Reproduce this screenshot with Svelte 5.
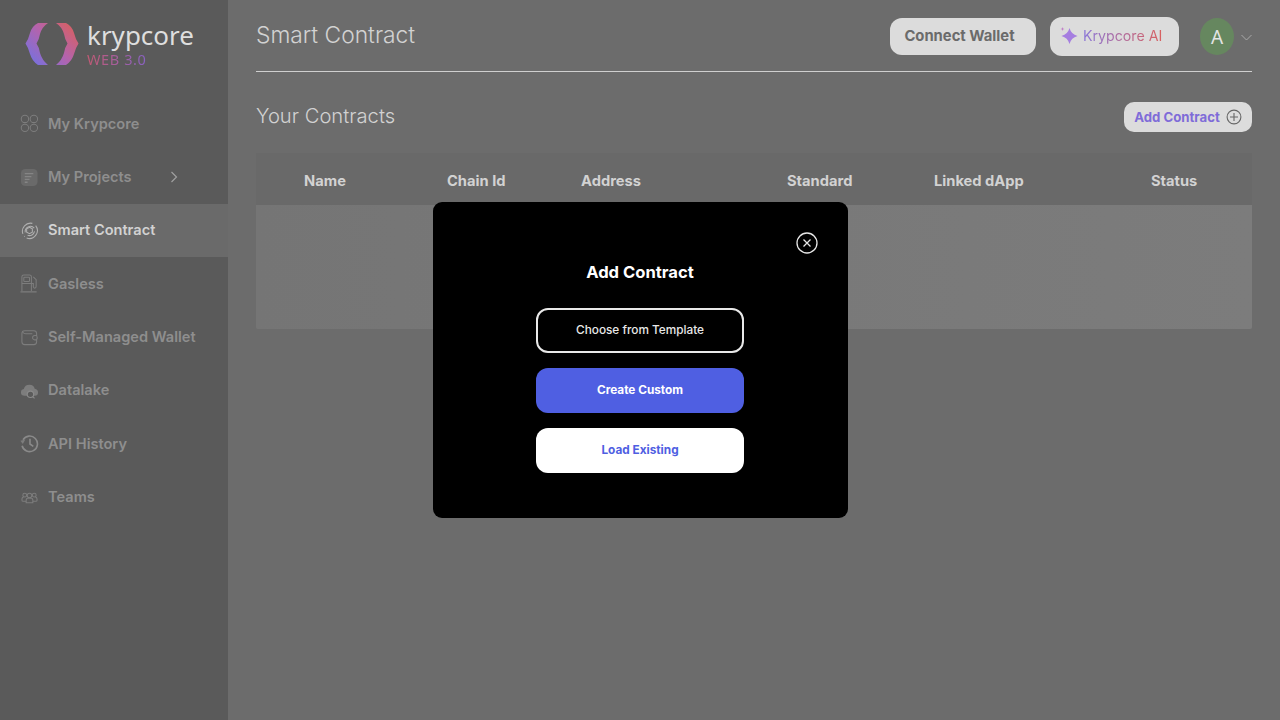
<script lang="ts">
    const columns = ["Name", "Chain Id", "Address", "Standard", "Linked dApp", "Status"];
</script>

<div class="page">
    <aside class="sidebar">
        <div class="logo">
            <svg width="56" height="46" viewBox="0 0 56 46" aria-hidden="true">
                <defs>
                    <linearGradient id="logoGrad" gradientUnits="userSpaceOnUse" x1="48" y1="2" x2="8" y2="42">
                        <stop offset="0" stop-color="#d8605f" />
                        <stop offset="0.5" stop-color="#b563ab" />
                        <stop offset="1" stop-color="#7a70dc" />
                    </linearGradient>
                </defs>
                <path d="M13 2 Q7 5 5 12 Q3.5 18 0.5 22.5 Q3.5 27 5 33 Q7 40 13 44 H23 Q17 39 15 32 Q14 26 11.5 22.5 Q14 19 15 13 Q17 6 23 2 Z" fill="url(#logoGrad)" />
                <path d="M41 2 Q47 5 49 12 Q50.5 18 53.5 22.5 Q50.5 27 49 33 Q47 40 41 44 H31 Q37 39 39 32 Q40 26 42.5 22.5 Q40 19 39 13 Q37 6 31 2 Z" fill="url(#logoGrad)" />
            </svg>
            <div class="logo-text">
                <span class="logo-name">krypcore</span>
                <span class="logo-sub">WEB 3.0</span>
            </div>
        </div>

        <nav class="nav">
            <div class="nav-item">
                <svg class="nav-icon" viewBox="0 0 20 20" aria-hidden="true">
                    <circle cx="5.2" cy="5.2" r="3.9" /><circle cx="14.6" cy="5.2" r="3.9" />
                    <circle cx="5.2" cy="14.6" r="3.9" /><circle cx="14.6" cy="14.6" r="3.9" />
                </svg>
                <span>My Krypcore</span>
            </div>
            <div class="nav-item">
                <svg class="nav-icon" viewBox="0 0 20 20" aria-hidden="true">
                    <rect x="1" y="1" width="17.5" height="18" rx="4.5" class="solid" />
                    <path d="M5 6 H14 M5 9 H12 M5 12 H10 M5 15 H8" class="lines" />
                </svg>
                <span>My Projects</span>
                <svg class="nav-chevron" width="8" height="12" viewBox="0 0 8 12" aria-hidden="true">
                    <path d="M1.5 1 L6.5 6 L1.5 11" />
                </svg>
            </div>
            <div class="nav-item active">
                <svg class="nav-icon" viewBox="0 0 20 20" aria-hidden="true">
                    <path d="M3 13.5 A8.5 8.5 0 0 1 13 2.5 M16.5 4.8 A8.5 8.5 0 0 1 7 18 M4.5 16 L5 16.4" />
                    <path d="M5.5 12 A5.5 5.5 0 0 1 15 7.5 M15.3 11 A5.5 5.5 0 0 1 8 15" />
                    <path d="M10 6.6 L13 8.3 V11.7 L10 13.4 L7 11.7 V8.3 Z" />
                </svg>
                <span>Smart Contract</span>
            </div>
            <div class="nav-item">
                <svg class="nav-icon" viewBox="0 0 20 20" aria-hidden="true">
                    <path d="M2 18 V3 Q2 1 4 1 H10 Q12 1 12 3 V18 M0.5 18.8 H17.5" />
                    <rect x="4" y="3.5" width="6" height="4.5" rx="0.8" />
                    <path d="M2 10 H12 M14 3 L17 6 V13 Q17 15 15.5 15 Q14 15 14 13 V10 H12" />
                </svg>
                <span>Gasless</span>
            </div>
            <div class="nav-item">
                <svg class="nav-icon" viewBox="0 0 20 20" aria-hidden="true">
                    <path d="M17.5 8 V6 Q17.5 3 14.5 3 H5 Q2 3 2 6 V14.5 Q2 17.5 5 17.5 H14.5 Q17.5 17.5 17.5 14.5 V12.5" />
                    <path d="M3 4.5 Q4 6 6 6 H13" />
                    <path d="M17.5 8 H15.5 A2.2 2.2 0 0 0 15.5 12.5 H17.5 Q18.7 10.2 17.5 8 Z" />
                </svg>
                <span>Self-Managed Wallet</span>
            </div>
            <div class="nav-item">
                <svg class="nav-icon" viewBox="0 0 20 20" aria-hidden="true">
                    <path class="solid" d="M5 15.5 Q1 15.5 1 12 Q1 9 4 8.5 Q5 4 10 4 Q14.5 4 15.5 8.2 Q19 8.8 19 12 Q19 15.5 15.5 15.5 Z" />
                    <circle class="glass" cx="11" cy="14" r="3.4" />
                    <path class="glass" d="M13.4 16.4 L15.3 18.3" />
                </svg>
                <span>Datalake</span>
            </div>
            <div class="nav-item">
                <svg class="nav-icon thick" viewBox="0 0 20 20" aria-hidden="true">
                    <path d="M3.2 6 A8.2 8.2 0 1 1 2.2 12.4" />
                    <path class="solid" d="M0.4 7.2 L5.6 5.8 L3 10.6 Z" />
                    <path d="M10.5 5 V10.5 L14 13" />
                </svg>
                <span>API History</span>
            </div>
            <div class="nav-item">
                <svg class="nav-icon" viewBox="0 0 20 20" aria-hidden="true">
                    <circle cx="10" cy="8" r="2.4" /><circle cx="5" cy="7.5" r="2" /><circle cx="15" cy="7.5" r="2" />
                    <path d="M6.5 15.5 V12.5 Q6.5 10.5 10 10.5 Q13.5 10.5 13.5 12.5 V15.5 Z" />
                    <path d="M6.5 14 H3.5 Q2 14 2 12.5 Q2 9.5 4 9.5 M13.5 14 H16.5 Q18 14 18 12.5 Q18 9.5 16 9.5" />
                </svg>
                <span>Teams</span>
            </div>
        </nav>
    </aside>

    <main class="main">
        <header class="topbar">
            <h1>Smart Contract</h1>
            <div class="top-actions">
                <button class="btn-wallet">Connect Wallet</button>
                <button class="btn-ai">
                    <svg width="18" height="18" viewBox="0 0 18 18" aria-hidden="true">
                        <path d="M9.5 1 Q11.2 7.3 17.5 9 Q11.2 10.7 9.5 17 Q7.8 10.7 1.5 9 Q7.8 7.3 9.5 1 Z" fill="#a57ee0" />
                        <path d="M2.5 0 L3 1.5 L4.5 2 L3 2.5 L2.5 4 L2 2.5 L0.5 2 L2 1.5 Z" fill="#c07cc8" />
                    </svg>
                    <span class="ai-label">Krypcore AI</span>
                </button>
                <div class="avatar">A</div>
                <svg class="avatar-chevron" width="11" height="7" viewBox="0 0 11 7" aria-hidden="true">
                    <path d="M0.5 1 L5.5 6 L10.5 1" />
                </svg>
            </div>
        </header>

        <div class="section-head">
            <h2>Your Contracts</h2>
            <button class="btn-add">
                Add Contract
                <svg width="16" height="16" viewBox="0 0 16 16" aria-hidden="true">
                    <circle cx="8" cy="8" r="6.9" />
                    <path d="M8 4 V12 M4 8 H12" />
                </svg>
            </button>
        </div>

        <div class="table">
            <div class="table-head">
                {#each columns as col}
                    <span>{col}</span>
                {/each}
            </div>
            <div class="table-body"></div>
        </div>
    </main>
</div>

<div class="backdrop">
    <div class="dialog" role="dialog" aria-modal="true" aria-labelledby="dialog-title">
        <button class="close" aria-label="Close">
            <svg width="22" height="22" viewBox="0 0 22 22" aria-hidden="true">
                <circle cx="11" cy="11" r="10" />
                <path d="M7.5 7.5 L14.5 14.5 M14.5 7.5 L7.5 14.5" />
            </svg>
        </button>
        <h2 id="dialog-title">Add Contract</h2>
        <div class="dialog-actions">
            <button class="btn-outline">Choose from Template</button>
            <button class="btn-primary">Create Custom</button>
            <button class="btn-light">Load Existing</button>
        </div>
    </div>
</div>

<style>
    :global(body) {
        margin: 0;
        background: #6c6c6c;
        font-family: Inter, "Noto Sans", sans-serif;
    }

    .page {
        display: flex;
        width: 1280px;
        height: 720px;
        overflow: hidden;
    }

    .sidebar {
        flex: 0 0 228px;
        background: #5a5a5a;
    }

    .logo {
        display: flex;
        align-items: flex-start;
        gap: 6px;
        padding: 21px 0 0 25px;
        height: 76.3px;
        box-sizing: content-box;
    }

    .logo-text {
        display: flex;
        flex-direction: column;
        font-family: "Noto Sans", "Open Sans", sans-serif;
    }

    .logo-name {
        font-size: 26px;
        line-height: 29px;
        color: #dedede;
    }

    .logo-sub {
        font-size: 14.5px;
        line-height: 18px;
        letter-spacing: 0.6px;
        width: fit-content;
        background: linear-gradient(90deg, #c25a74, #8a62c4);
        -webkit-background-clip: text;
        background-clip: text;
        color: transparent;
    }

    .nav-item {
        display: flex;
        align-items: center;
        gap: 9px;
        height: 53.33px;
        padding: 0 0 0.5px 20px;
        color: #8e8e8e;
        font-size: 14.6px;
        font-weight: 600;
        box-sizing: border-box;
    }

    .nav-item.active {
        background: #6a6a6a;
        color: #d2d2d2;
    }

    .nav-icon {
        flex: none;
        width: 19px;
        height: 19px;
        fill: none;
        stroke: #7d7d7d;
        stroke-width: 1.1;
    }

    .nav-icon .solid {
        fill: #7d7d7d;
        stroke: none;
    }

    .nav-icon rect.solid {
        fill: #6a6a6a;
    }

    .nav-icon .lines {
        stroke: #858585;
        stroke-width: 1.4;
    }

    .nav-icon .glass {
        fill: #5a5a5a;
        stroke: #8a8a8a;
        stroke-width: 1.2;
    }

    .nav-icon.thick {
        stroke: #8a8a8a;
        stroke-width: 1.7;
    }

    .active .nav-icon {
        stroke: #b0b0b0;
    }

    .nav-chevron {
        margin-left: 29px;
        fill: none;
        stroke: #a0a0a0;
        stroke-width: 1.2;
    }

    .main {
        flex: 1;
        padding: 0 28px;
        min-width: 0;
    }

    .topbar {
        display: flex;
        align-items: center;
        justify-content: space-between;
        height: 71px;
        border-bottom: 1px solid #cfcfcf;
        box-sizing: content-box;
    }

    .topbar h1 {
        margin: 0 0 2px;
        font-size: 22.8px;
        font-weight: 300;
        color: #d2d2d2;
    }

    .top-actions {
        display: flex;
        align-items: center;
        padding-top: 2px;
    }

    button {
        font-family: inherit;
        border: none;
        cursor: pointer;
    }

    .btn-wallet {
        width: 146px;
        height: 37px;
        padding: 0 7px 1px 0;
        border-radius: 12px;
        background: #dcdcdc;
        color: #6b6b6b;
        font-size: 14.8px;
        font-weight: 700;
    }

    .btn-ai {
        display: flex;
        align-items: center;
        gap: 5px;
        width: 129px;
        height: 39px;
        margin-left: 14px;
        padding: 0 0 2px 10px;
        border-radius: 12px;
        background: #dcdcdc;
    }

    .ai-label {
        font-size: 14.2px;
        background: linear-gradient(90deg, #8a76d8, #d8605f);
        -webkit-background-clip: text;
        background-clip: text;
        color: transparent;
    }

    .avatar {
        display: flex;
        align-items: center;
        justify-content: center;
        width: 34px;
        height: 37px;
        margin-left: 21px;
        border-radius: 50%;
        background: #66875f;
        color: #e4e4e4;
        font-size: 19px;
        font-family: "Noto Sans", sans-serif;
    }

    .avatar-chevron {
        margin: 2px 0 0 7px;
        fill: none;
        stroke: #a8a8a8;
        stroke-width: 1;
    }

    .section-head {
        display: flex;
        align-items: center;
        justify-content: space-between;
        height: 60px;
        margin-top: 15px;
    }

    .section-head h2 {
        margin: 0 0 4px;
        font-size: 20.2px;
        font-weight: 300;
        color: #d2d2d2;
    }

    .btn-add {
        display: flex;
        align-items: center;
        justify-content: center;
        gap: 6px;
        width: 128px;
        height: 30px;
        padding: 0;
        border-radius: 10px;
        background: #dcdcdc;
        color: #7f6cd8;
        font-size: 13.2px;
        font-weight: 700;
    }

    .btn-add svg {
        fill: none;
        stroke: #666;
        stroke-width: 1.1;
    }

    .table {
        margin-top: 6px;
    }

    .table-head {
        display: grid;
        grid-template-columns: 143px 134px 206px 147px 217px 1fr;
        align-items: center;
        height: 52px;
        padding: 4px 0 0 48px;
        background: #696969;
        color: #d2d2d2;
        font-size: 14.7px;
        font-weight: 700;
        box-sizing: border-box;
    }

    .table-body {
        height: 124px;
        border-radius: 0 0 2px 2px;
        background: linear-gradient(90deg, #757575, #7c7c7c);
    }

    .backdrop {
        position: fixed;
        inset: 0;
        display: flex;
        align-items: center;
        justify-content: center;
    }

    .dialog {
        position: relative;
        display: flex;
        flex-direction: column;
        align-items: center;
        width: 415px;
        height: 316px;
        padding-top: 58px;
        border-radius: 9px;
        background: #000;
        box-sizing: border-box;
    }

    .close {
        position: absolute;
        top: 30px;
        right: 30px;
        width: 22px;
        height: 22px;
        padding: 0;
        background: none;
        display: flex;
    }

    .close svg {
        fill: none;
        stroke: #e6e6e6;
        stroke-width: 1.3;
    }

    .dialog h2 {
        margin: 0;
        font-size: 16.6px;
        line-height: 24px;
        font-weight: 700;
        color: #fff;
    }

    .dialog-actions {
        display: flex;
        flex-direction: column;
        gap: 15px;
        margin-top: 24px;
    }

    .dialog-actions button {
        width: 208px;
        height: 45px;
        padding: 0 0 2px;
        border-radius: 12px;
        font-size: 11.8px;
    }

    .btn-outline {
        background: #000;
        border: 2px solid #e8e8e8;
        color: #e8e8e8;
        font-weight: 500;
    }

    .btn-primary {
        background: #4f5fe2;
        color: #fff;
        font-weight: 700;
    }

    .btn-light {
        background: #fff;
        color: #4f5fe2;
        font-weight: 700;
    }
</style>
